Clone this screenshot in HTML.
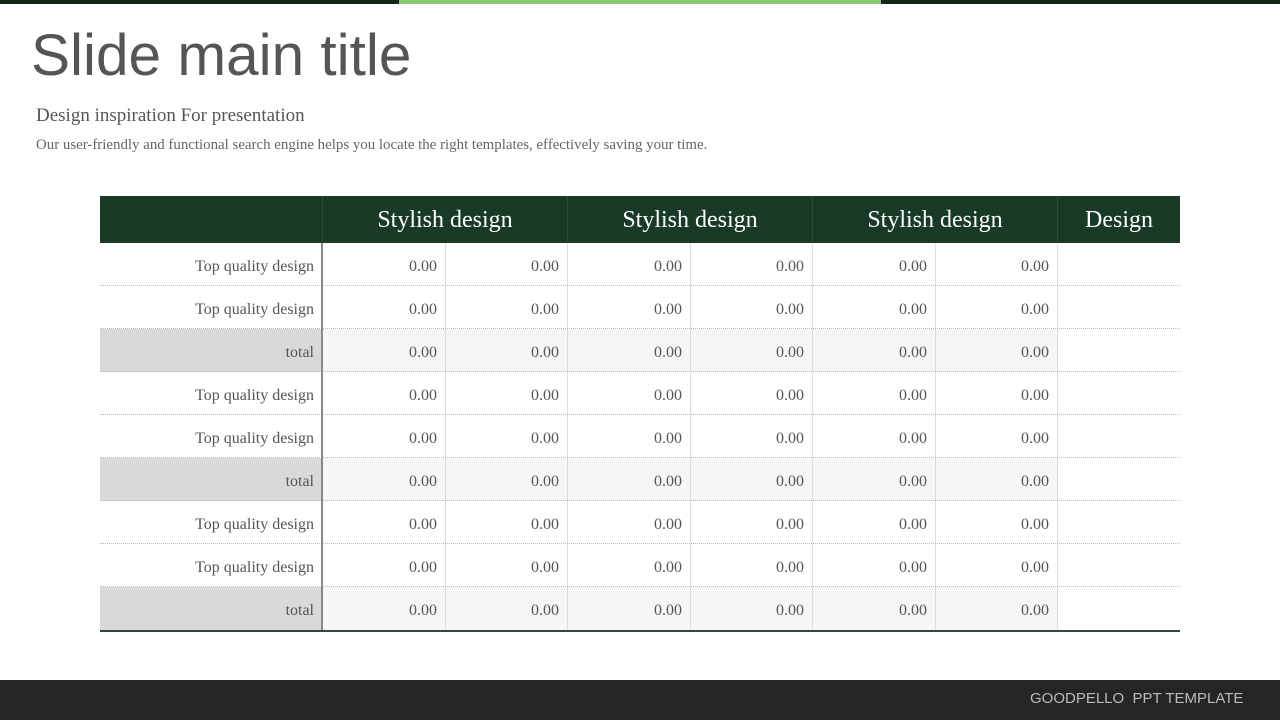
<!DOCTYPE html>
<html><head><meta charset="utf-8"><style>
*{margin:0;padding:0;box-sizing:border-box}
body{width:1280px;height:720px;position:relative;background:#fff;overflow:hidden;font-family:"Liberation Serif",serif}
.a{position:absolute}
.h{position:absolute;top:196px;height:47px;color:#fff;font-size:24px;text-align:center;line-height:49px;border-left:1px solid #2e4a38}
.c{position:absolute;height:43px;line-height:47px;font-size:16px;color:#555;text-align:right;padding-right:8px}
</style></head><body>
<div class="a" style="left:0;top:0;width:1280px;height:4px;background:#13261a"></div>
<div class="a" style="left:399px;top:0;width:482px;height:4px;background:#8acb6e"></div>
<div class="a" style="left:31px;top:22px;font-family:'Liberation Sans',sans-serif;font-size:58.5px;color:#555">Slide main title</div>
<div class="a" style="left:36px;top:105px;font-size:19px;color:#555">Design inspiration For presentation</div>
<div class="a" style="left:36px;top:137px;font-size:14.9px;color:#666">Our user-friendly and functional search engine helps you locate the right templates, effectively saving your time.</div>
<div class="a" style="left:100px;top:196px;width:1080px;height:47px;background:#193a27"></div>
<div class="h" style="left:322px;width:245px">Stylish design</div>
<div class="h" style="left:567px;width:245px">Stylish design</div>
<div class="h" style="left:812px;width:245px">Stylish design</div>
<div class="h" style="left:1057px;width:123px">Design</div>
<div id="rows"></div>
<div class="a" style="left:321px;top:243px;width:2px;height:389px;background:#888"></div>
<div class="a" style="left:100px;top:630px;width:1080px;height:2px;background:#2f4a3a"></div>
<div class="a" style="left:0;top:680px;width:1280px;height:40px;background:#252525"></div>
<div class="a" style="left:1030px;top:690px;font-family:'Liberation Sans',sans-serif;font-size:15px;color:#bbb">GOODPELLO&nbsp; PPT TEMPLATE</div>
<script>
var labels=["Top quality design","Top quality design","total","Top quality design","Top quality design","total","Top quality design","Top quality design","total"];
var xs=[322,445,567,690,812,935,1057];var h="";
labels.forEach(function(l,i){var t=243+i*43,tot=l=="total";
h+='<div class="c" style="left:100px;top:'+t+'px;width:222px;background:'+(tot?'#d9d9d9':'#fff')+'">'+l+'</div>';
for(var j=0;j<6;j++){h+='<div class="c" style="left:'+xs[j]+'px;top:'+t+'px;width:'+(xs[j+1]-xs[j])+'px;background:'+(tot?'#f6f6f6':'#fff')+';border-left:1px solid #ddd">0.00</div>';}
h+='<div class="c" style="left:1057px;top:'+t+'px;width:123px;border-left:1px solid #ddd"></div>';
if(i<8)h+='<div class="a" style="left:100px;top:'+(t+42)+'px;width:1080px;height:1px;border-top:1px dotted #bbb"></div>';});
document.getElementById("rows").innerHTML=h;
</script>
</body></html>
